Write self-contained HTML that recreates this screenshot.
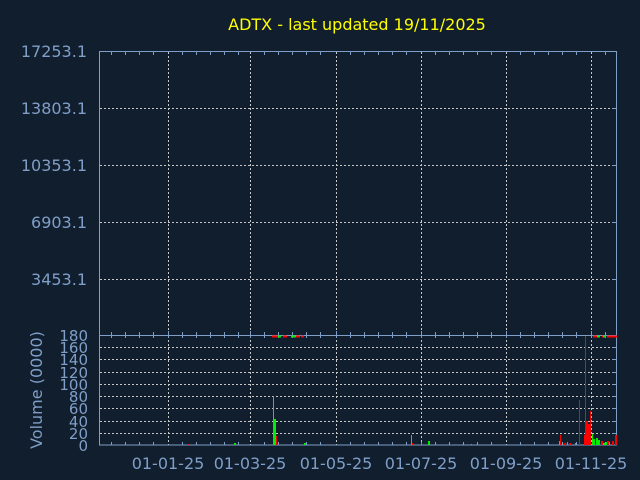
<!DOCTYPE html>
<html><head><style>
body{margin:0;background:#111e2e;}
svg{display:block}
text{font-family:"DejaVu Sans","Liberation Sans",sans-serif;}
</style></head><body>
<svg width="640" height="480" viewBox="0 0 640 480" xmlns="http://www.w3.org/2000/svg">
<rect width="640" height="480" fill="#111e2e"/>
<text x="357" y="30" fill="#ffff00" font-size="16" text-anchor="middle">ADTX - last updated 19/11/2025</text>
<g fill="#7f9fc8" font-size="16" text-anchor="end">
<text x="87" y="57">17253.1</text>
<text x="87" y="114">13803.1</text>
<text x="87" y="171">10353.1</text>
<text x="87" y="228">6903.1</text>
<text x="87" y="285">3453.1</text>
</g>
<g fill="#7f9fc8" font-size="15" text-anchor="end">
<text x="88" y="341">180</text><text x="88" y="353">160</text><text x="88" y="365">140</text>
<text x="88" y="378">120</text><text x="88" y="390">100</text><text x="88" y="402">80</text>
<text x="88" y="414">60</text><text x="88" y="427">40</text><text x="88" y="439">20</text><text x="88" y="451">0</text>
</g>
<text transform="translate(42,390) rotate(-90)" fill="#7f9fc8" font-size="16" text-anchor="middle">Volume (0000)</text>
<g fill="#7f9fc8" font-size="16" text-anchor="middle">
<text x="168" y="469">01-01-25</text><text x="250" y="469">01-03-25</text><text x="336" y="469">01-05-25</text>
<text x="421" y="469">01-07-25</text><text x="506" y="469">01-09-25</text><text x="591" y="469">01-11-25</text>
</g>
<g stroke="#c8c8c8" stroke-width="1" stroke-dasharray="2,2">
<path d="M100 108.5H612M100 165.5H612M100 222.5H612M100 279.5H612"/>
<path d="M100 347.5H612M100 359.5H612M100 372.5H612M100 384.5H612M100 396.5H612M100 408.5H612M100 421.5H612M100 433.5H612"/>
<path d="M168.5 52V445M250.5 52V445M336.5 52V445M421.5 52V445M506.5 52V445M591.5 52V445"/>
</g>
<g stroke="#7f9fc8" stroke-width="1" fill="none">
<rect x="99.5" y="51.5" width="517" height="393.5"/>
<path d="M100 335.5H617"/>
<path d="M612 108.5H617M612 165.5H617M612 222.5H617M612 279.5H617M612 347.5H617M612 359.5H617M612 372.5H617M612 384.5H617M612 396.5H617M612 408.5H617M612 421.5H617M612 433.5H617"/>
<path d="M111.5 52v3M125.5 52v3M139.5 52v3M153.5 52v3M182.5 52v3M196.5 52v3M210.5 52v3M224.5 52v3M238.5 52v3M264.5 52v3M278.5 52v3M292.5 52v3M306.5 52v3M320.5 52v3M350.5 52v3M364.5 52v3M378.5 52v3M392.5 52v3M406.5 52v3M435.5 52v3M449.5 52v3M463.5 52v3M477.5 52v3M491.5 52v3M520.5 52v3M534.5 52v3M548.5 52v3M562.5 52v3M576.5 52v3M605.5 52v3"/>
<path d="M111.5 332v6M125.5 332v6M139.5 332v6M153.5 332v6M168.5 331v7M182.5 332v6M196.5 332v6M210.5 332v6M224.5 332v6M238.5 332v6M250.5 331v7M264.5 332v6M278.5 332v6M292.5 332v6M306.5 332v6M320.5 332v6M336.5 331v7M350.5 332v6M364.5 332v6M378.5 332v6M392.5 332v6M406.5 332v6M421.5 331v7M435.5 332v6M449.5 332v6M463.5 332v6M477.5 332v6M491.5 332v6M506.5 331v7M520.5 332v6M534.5 332v6M548.5 332v6M562.5 332v6M576.5 332v6M591.5 331v7M605.5 332v6"/>
<path d="M111.5 442v3M125.5 442v3M139.5 442v3M153.5 442v3M182.5 442v3M196.5 442v3M210.5 442v3M224.5 442v3M238.5 442v3M264.5 442v3M278.5 442v3M292.5 442v3M306.5 442v3M320.5 442v3M350.5 442v3M364.5 442v3M378.5 442v3M392.5 442v3M406.5 442v3M435.5 442v3M449.5 442v3M463.5 442v3M477.5 442v3M491.5 442v3M520.5 442v3M534.5 442v3M548.5 442v3M562.5 442v3M576.5 442v3M605.5 442v3"/>
</g>
<g stroke-width="2">
<path d="M272 336.5h6M283 336.5h4M296 336.5h4M301 336.5h3M593 336.5h4M602 336.5h4M607 336.5h10" stroke="#ff0000"/>
<path d="M278 336.5h3M291 336.5h5M597 336.5h3M603 336.5h3" stroke="#00ee00"/>
</g>
<g fill="#00ee00">
<rect x="273" y="396" width="1" height="49"/><rect x="273" y="419" width="3" height="26"/>
<rect x="234" y="443" width="2" height="2"/><rect x="304" y="443" width="2" height="2"/>
<rect x="411" y="435" width="1" height="10"/><rect x="421" y="442" width="1" height="3"/><rect x="428" y="441" width="2" height="4"/>
<rect x="471" y="444" width="1" height="1"/>
<rect x="559" y="441" width="1" height="4"/><rect x="567" y="442" width="1" height="3"/><rect x="575" y="443" width="1" height="2"/>
<rect x="592" y="434" width="1" height="11"/><rect x="593" y="439" width="2" height="6"/><rect x="596" y="438" width="2" height="7"/><rect x="598" y="440" width="2" height="5"/>
<rect x="603" y="443" width="2" height="2"/><rect x="606" y="442" width="1" height="3"/><rect x="609" y="442" width="1" height="3"/>
</g>
<g fill="#ff0000">
<rect x="276" y="436" width="1" height="9"/><rect x="188" y="444" width="1" height="1"/><rect x="267" y="444" width="1" height="1"/>
<rect x="412" y="443" width="1" height="2"/><rect x="451" y="444" width="1" height="1"/>
<rect x="560" y="435" width="1" height="10"/><rect x="564" y="443" width="2" height="2"/><rect x="569" y="443" width="2" height="2"/>
<rect x="579" y="400" width="1" height="45"/><rect x="584" y="435" width="1" height="10"/>
<rect x="585" y="336" width="1" height="109"/><rect x="586" y="421" width="2" height="24"/><rect x="588" y="424" width="2" height="21"/>
<rect x="590" y="411" width="1" height="34"/>
<rect x="601" y="441" width="2" height="4"/><rect x="607" y="441" width="2" height="4"/><rect x="612" y="441" width="2" height="4"/><rect x="615" y="435" width="2" height="10"/>
</g>
</svg>
</body></html>
